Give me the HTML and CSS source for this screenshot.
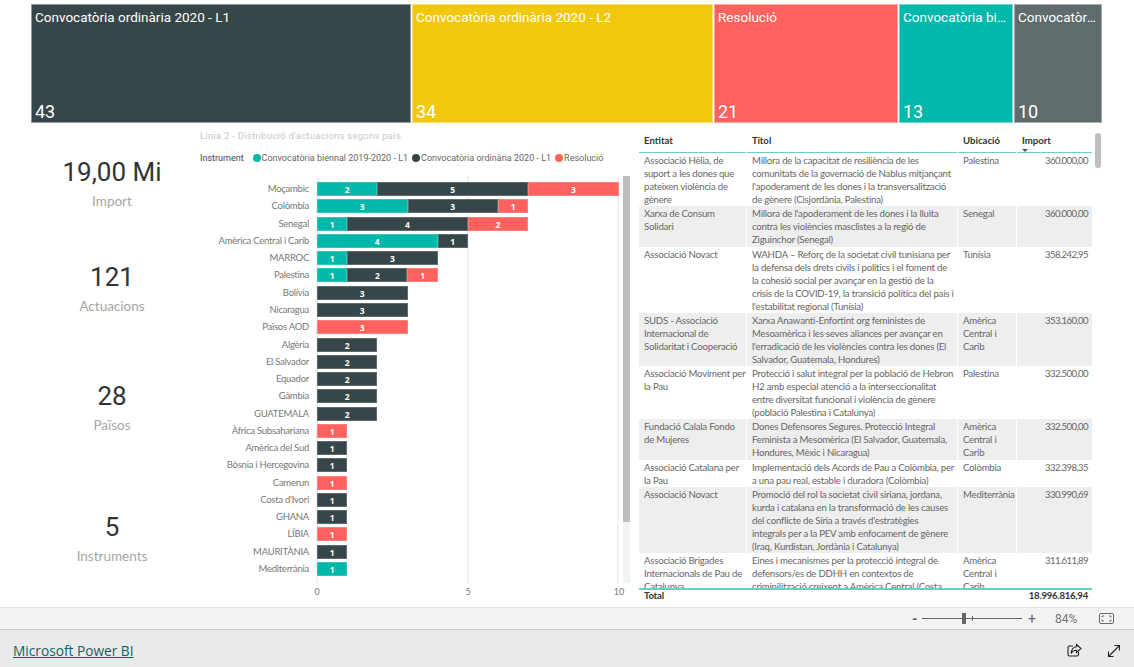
FILE: index.html
```html
<!DOCTYPE html>
<html lang="ca">
<head>
<meta charset="utf-8">
<title>Microsoft Power BI</title>
<link rel="stylesheet" href="styles.css">
</head>
<body>
<main class="report">
  <section class="treemap">
    <div class="tile tile-dark" style="width:380px"><span class="tile-name">Convocatòria ordinària 2020 - L1</span><span class="tile-num">43</span></div>
    <div class="tile tile-yellow" style="width:301px"><span class="tile-name">Convocatòria ordinària 2020 - L2</span><span class="tile-num">34</span></div>
    <div class="tile tile-red" style="width:184px"><span class="tile-name">Resolució</span><span class="tile-num">21</span></div>
    <div class="tile tile-teal" style="width:114px"><span class="tile-name">Convocatòria biennal 2019-2020 - L1</span><span class="tile-num">13</span></div>
    <div class="tile tile-gray" style="width:88px"><span class="tile-name">Convocatòria biennal 2019</span><span class="tile-num">10</span></div>
  </section>
  <section class="content">
    <aside class="kpis">
      <div class="kpi"><div class="kpi-value">19,00 Mi</div><div class="kpi-label">Import</div></div>
      <div class="kpi"><div class="kpi-value">121</div><div class="kpi-label">Actuacions</div></div>
      <div class="kpi"><div class="kpi-value">28</div><div class="kpi-label">Països</div></div>
      <div class="kpi"><div class="kpi-value">5</div><div class="kpi-label">Instruments</div></div>
    </aside>
    <section class="chart">
      <h2 class="chart-title">Línia 2 - Distribució d'actuacions segons país</h2>
      <div class="legend">
        <span class="legend-name">Instrument</span>
        <span class="legend-item"><i class="dot c-teal"></i>Convocatòria biennal 2019-2020 - L1</span>
        <span class="legend-item"><i class="dot c-dark"></i>Convocatòria ordinària 2020 - L1</span>
        <span class="legend-item"><i class="dot c-red"></i>Resolució</span>
      </div>
      <div class="plot">
        <div class="row"><span class="cat">Moçambic</span><div class="bar"><b class="c-teal" style="width:60.3px">2</b><b class="c-dark" style="width:150.8px">5</b><b class="c-red" style="width:90.5px">3</b></div></div>
        <div class="row"><span class="cat">Colòmbia</span><div class="bar"><b class="c-teal" style="width:90.5px">3</b><b class="c-dark" style="width:90.5px">3</b><b class="c-red" style="width:30.2px">1</b></div></div>
        <div class="row"><span class="cat">Senegal</span><div class="bar"><b class="c-teal" style="width:30.2px">1</b><b class="c-dark" style="width:120.6px">4</b><b class="c-red" style="width:60.3px">2</b></div></div>
        <div class="row"><span class="cat">Amèrica Central i Carib</span><div class="bar"><b class="c-teal" style="width:120.6px">4</b><b class="c-dark" style="width:30.2px">1</b></div></div>
        <div class="row"><span class="cat">MARROC</span><div class="bar"><b class="c-teal" style="width:30.2px">1</b><b class="c-dark" style="width:90.5px">3</b></div></div>
        <div class="row"><span class="cat">Palestina</span><div class="bar"><b class="c-teal" style="width:30.2px">1</b><b class="c-dark" style="width:60.3px">2</b><b class="c-red" style="width:30.2px">1</b></div></div>
        <div class="row"><span class="cat">Bolívia</span><div class="bar"><b class="c-dark" style="width:90.5px">3</b></div></div>
        <div class="row"><span class="cat">Nicaragua</span><div class="bar"><b class="c-dark" style="width:90.5px">3</b></div></div>
        <div class="row"><span class="cat">Països AOD</span><div class="bar"><b class="c-red" style="width:90.5px">3</b></div></div>
        <div class="row"><span class="cat">Algèria</span><div class="bar"><b class="c-dark" style="width:60.3px">2</b></div></div>
        <div class="row"><span class="cat">El Salvador</span><div class="bar"><b class="c-dark" style="width:60.3px">2</b></div></div>
        <div class="row"><span class="cat">Equador</span><div class="bar"><b class="c-dark" style="width:60.3px">2</b></div></div>
        <div class="row"><span class="cat">Gàmbia</span><div class="bar"><b class="c-dark" style="width:60.3px">2</b></div></div>
        <div class="row"><span class="cat">GUATEMALA</span><div class="bar"><b class="c-dark" style="width:60.3px">2</b></div></div>
        <div class="row"><span class="cat">Àfrica Subsahariana</span><div class="bar"><b class="c-red" style="width:30.2px">1</b></div></div>
        <div class="row"><span class="cat">Amèrica del Sud</span><div class="bar"><b class="c-dark" style="width:30.2px">1</b></div></div>
        <div class="row"><span class="cat">Bòsnia i Hercegovina</span><div class="bar"><b class="c-dark" style="width:30.2px">1</b></div></div>
        <div class="row"><span class="cat">Camerun</span><div class="bar"><b class="c-red" style="width:30.2px">1</b></div></div>
        <div class="row"><span class="cat">Costa d'Ivori</span><div class="bar"><b class="c-dark" style="width:30.2px">1</b></div></div>
        <div class="row"><span class="cat">GHANA</span><div class="bar"><b class="c-dark" style="width:30.2px">1</b></div></div>
        <div class="row"><span class="cat">LÍBIA</span><div class="bar"><b class="c-red" style="width:30.2px">1</b></div></div>
        <div class="row"><span class="cat">MAURITÀNIA</span><div class="bar"><b class="c-dark" style="width:30.2px">1</b></div></div>
        <div class="row"><span class="cat">Mediterrània</span><div class="bar"><b class="c-teal" style="width:30.2px">1</b></div></div>
      </div>
      <div class="axis"><span>0</span><span>5</span><span>10</span></div>
      <div class="vscroll"><div class="vthumb"></div></div>
    </section>
    <section class="table">
      <div class="thead">
        <div>Entitat</div><div>Títol</div><div>Ubicació</div>
        <div class="th-import">Import<i class="sort"></i></div>
      </div>
      <div class="tbody">
        <div class="tr"><div>Associació Hèlia, de<br>suport a les dones que<br>pateixen violència de<br>gènere</div><div>Millora de la capacitat de resiliència de les<br>comunitats de la governació de Nablus mitjançant<br>l'apoderament de les dones i la transversalització<br>de gènere (Cisjordània, Palestina)</div><div>Palestina</div><div class="num">360.000,00</div></div>
        <div class="tr"><div>Xarxa de Consum<br>Solidari</div><div>Millora de l'apoderament de les dones i la lluita<br>contra les violències masclistes a la regió de<br>Ziguinchor (Senegal)</div><div>Senegal</div><div class="num">360.000,00</div></div>
        <div class="tr"><div>Associació Novact</div><div>WAHDA – Reforç de la societat civil tunisiana per<br>la defensa dels drets civils i polítics i el foment de<br>la cohesió social per avançar en la gestió de la<br>crisis de la COVID-19, la transició política del país i<br>l'estabilitat regional (Tunísia)</div><div>Tunísia</div><div class="num">358.242,95</div></div>
        <div class="tr"><div>SUDS - Associació<br>Internacional de<br>Solidaritat i Cooperació</div><div>Xarxa Anawanti-Enfortint org feministes de<br>Mesoamèrica i les seves aliances per avançar en<br>l'erradicació de les violències contra les dones (El<br>Salvador, Guatemala, Hondures)</div><div>Amèrica<br>Central i<br>Carib</div><div class="num">353.160,00</div></div>
        <div class="tr"><div>Associació Moviment per<br>la Pau</div><div>Protecció i salut integral per la població de Hebron<br>H2 amb especial atenció a la interseccionalitat<br>entre diversitat funcional i violència de gènere<br>(població Palestina i Catalunya)</div><div>Palestina</div><div class="num">332.500,00</div></div>
        <div class="tr"><div>Fundació Calala Fondo<br>de Mujeres</div><div>Dones Defensores Segures. Protecció Integral<br>Feminista a Mesomèrica (El Salvador, Guatemala,<br>Hondures, Mèxic i Nicaragua)</div><div>Amèrica<br>Central i<br>Carib</div><div class="num">332.500,00</div></div>
        <div class="tr"><div>Associació Catalana per<br>la Pau</div><div>Implementació dels Acords de Pau a Colòmbia, per<br>a una pau real, estable i duradora (Colòmbia)</div><div>Colòmbia</div><div class="num">332.398,35</div></div>
        <div class="tr"><div>Associació Novact</div><div>Promoció del rol la societat civil siriana, jordana,<br>kurda i catalana en la transformació de les causes<br>del conflicte de Síria a través d'estratègies<br>integrals per a la PEV amb enfocament de gènere<br>(Iraq, Kurdistan, Jordània i Catalunya)</div><div>Mediterrània</div><div class="num">330.990,69</div></div>
        <div class="tr"><div>Associació Brigades<br>Internacionals de Pau de<br>Catalunya</div><div>Eines i mecanismes per la protecció integral de<br>defensors/es de DDHH en contextos de<br>criminilització creixent a Amèrica Central (Costa<br>Rica, Guatemala, Hondures)</div><div>Amèrica<br>Central i<br>Carib</div><div class="num">311.611,89</div></div>
      </div>
      <div class="tfoot"><div>Total</div><div></div><div></div><div class="num">18.996.816,94</div></div>
      <div class="tscroll"></div>
    </section>
  </section>
</main>
<div class="zoombar">
  <span class="zoom-minus">-</span>
  <div class="slider"><i class="slider-tick"></i><i class="slider-thumb"></i></div>
  <span class="zoom-plus">+</span>
  <span class="zoom-pct">84%</span>
  <svg class="fit" width="15" height="11" viewBox="0 0 15 11" fill="none" stroke="#6b6b6b"><rect x=".5" y=".5" width="14" height="10" rx="1.5"/><path d="M3 4.5V3h2M10 3h2v1.5M12 6.500V8h-2M5 8H3V6.500" stroke-width=".9"/></svg>
</div>
<footer class="footer">
  <a class="brand" href="#">Microsoft Power BI</a>
  <div class="footer-icons">
    <svg width="15" height="15" viewBox="0 0 15 15" fill="none" stroke="#222" stroke-width="1.100"><path d="M6 3H2.500A1.500 1.500 0 0 0 1 4.500v7A1.500 1.500 0 0 0 2.500 13h7.500a1.500 1.500 0 0 0 1.500-1.500V9"/><path d="M9.500 1.500 14 5.500 9.500 9.500V7.300C7 7.300 5.300 8.300 4.300 10.500 4.300 7 6.300 4.200 9.500 3.800Z"/></svg>
    <svg width="14" height="14" viewBox="0 0 14 14" fill="none" stroke="#222" stroke-width="1.100"><path d="M1.500 12.500 12.500 1.500M7.500 1.500h5v5M1.500 7.500v5h5"/></svg>
  </div>
</footer>
</body>
</html>
```
FILE: styles.css
```css
* { box-sizing: border-box; }
html, body { margin: 0; height: 667px; overflow: hidden; background: #fff; }
body { display: flex; flex-direction: column; font-family: "Lato", "Open Sans", sans-serif; color: #666; }

.report { height: 607px; padding-top: 4px; display: flex; flex-direction: column; overflow: hidden; }

/* Treemap */
.treemap { display: flex; gap: 1px; height: 119px; margin-left: 31px; flex: none; }
.tile { flex: none; padding: 4px 4px 0 4px; display: flex; flex-direction: column; justify-content: space-between; color: #fff; font-family: "Roboto", sans-serif; min-width: 0; overflow: hidden; box-shadow: inset 0 0 0 1px rgba(255, 255, 255, .45); }
.tile-name { font-size: 13.5px; line-height: 18px; white-space: nowrap; overflow: hidden; text-overflow: ellipsis; }
.tile-num { font-size: 18px; line-height: 22px; }
.tile-dark { background: #374649; }
.tile-yellow { background: #f2c80f; }
.tile-red { background: #fd625e; }
.tile-teal { background: #01b8aa; }
.tile-gray { background: #5f6b6d; }

.content { flex: 1; display: flex; min-height: 0; }

/* KPI cards */
.kpis { width: 200px; flex: none; padding-left: 24px; padding-top: 32px; display: flex; flex-direction: column; }
.kpi { text-align: center; }
.kpi + .kpi { margin-top: 47px; }
.kpi:nth-child(3) { margin-top: 61px; }
.kpi:nth-child(4) { margin-top: 73px; }
.kpi-value { font-family: "Roboto", sans-serif; font-size: 26px; line-height: 34px; color: #333; }
.kpi-label { font-size: 13.500px; line-height: 24px; color: #a6a6a6; }

/* Bar chart */
.chart { width: 439px; flex: none; position: relative; }
.chart-title { margin: 6px 0 0; font-family: "Roboto", sans-serif; font-weight: 400; font-size: 9.500px; line-height: 14px; color: #c8c8c8; letter-spacing: .25px; }
.legend { display: flex; align-items: center; margin-top: 8px; height: 14px; font-family: "Roboto", sans-serif; font-size: 9px; color: #666; white-space: nowrap; }
.legend-name { margin-right: 9px; color: #444; }
.legend-item { display: flex; align-items: center; margin-right: 4px; }
.dot { width: 8px; height: 8px; border-radius: 50%; margin-right: 1px; display: block; }
.c-teal { background: #01b8aa; }
.c-dark { background: #374649; }
.c-red { background: #fd625e; }

.plot { margin-top: 11px; padding-top: 4.500px; height: 408px; background:
  linear-gradient(#f2f2f2, #f2f2f2) 116px 0 / 2px 100% no-repeat,
  linear-gradient(#f2f2f2, #f2f2f2) 267px 0 / 2px 100% no-repeat,
  linear-gradient(#f2f2f2, #f2f2f2) 417px 0 / 2px 100% no-repeat; }
.row { display: flex; align-items: center; height: 17.270px; }
.cat { width: 109px; flex: none; text-align: right; font-size: 9.500px; letter-spacing: -.25px; line-height: 14px; color: #777; white-space: nowrap; margin-right: 8px; }
.bar { display: flex; height: 14px; }
.bar b { display: block; height: 14px; text-align: center; color: #fff; font-family: "Open Sans", sans-serif; font-size: 8.500px; line-height: 15px; font-weight: 700; box-shadow: inset 0 0 0 1px rgba(255, 255, 255, .2); }

.axis { display: grid; grid-template-columns: 151px 151px 151px; width: 453px; margin-left: 41.500px; margin-top: 1px; font-size: 9px; line-height: 14px; color: #777; text-align: center; }
.vscroll { position: absolute; left: 423px; top: 53px; width: 7px; height: 407px; background: #f3f3f3; }
.vthumb { height: 346px; background: #bfbfbf; }

/* Table */
.table { width: 453px; flex: none; position: relative; display: flex; flex-direction: column; font-size: 9.600px; letter-spacing: -.2px; line-height: 13px; }
.thead, .tr, .tfoot { display: grid; grid-template-columns: 107px 210px 58px 75px; column-gap: 1px; }
.thead { margin-top: 10px; height: 20px; font-weight: 700; color: #333; letter-spacing: 0; }
.thead > div { padding: 0 5px; border-bottom: 1px solid #69cfc5; line-height: 15px; }
.th-import { position: relative; }
.sort { position: absolute; left: 5px; bottom: 0; border: 3px solid transparent; border-top: 3px solid #555; border-bottom: 0; }
.tbody { height: 435px; overflow: hidden; flex: none; white-space: nowrap; }
.tr > div { padding: 1px 5px .3px; }
.tr:nth-child(even) > div { background: #eee; }
.num { text-align: right; padding-right: 4px !important; letter-spacing: -.6px; }
.tfoot { border-top: 2px solid #69cfc5; font-weight: 700; color: #333; height: 16px; }
.tfoot > div { padding: 0 5px; line-height: 12px; }
.tfoot .num { letter-spacing: -.25px; }
.tscroll { position: absolute; right: -9px; top: 10px; width: 6px; height: 35px; border-radius: 3px; background: #bfbfbf; }

/* Zoom bar */
.zoombar { height: 23px; flex: none; display: flex; align-items: center; background: #f3f3f3; border-top: 1px solid #e2e2e2; border-bottom: 1px solid #c8c8c8; font-family: "Roboto", sans-serif; color: #666; padding-left: 912px; }
.zoom-minus { width: 10px; font-size: 14px; font-weight: 700; line-height: 14px; }
.slider { position: relative; width: 100px; height: 1px; background: #666; }
.slider-thumb { position: absolute; left: 40px; top: -5px; width: 4px; height: 11px; background: #666; }
.slider-tick { position: absolute; left: 50px; top: -2px; width: 1px; height: 5px; background: #666; }
.zoom-plus { margin-left: 6px; width: 10px; font-size: 14px; line-height: 14px; }
.zoom-pct { margin-left: 17px; width: 30px; font-size: 12px; color: #777; }
.fit { margin-left: 14px; }

/* Footer */
.footer { flex: 1; display: flex; align-items: center; justify-content: space-between; background: #eaeaea; padding: 4px 13px 0; }
.brand { font-family: "Open Sans", sans-serif; font-size: 13.700px; color: #11625f; }
.footer-icons { display: flex; gap: 25px; align-items: center; }
```
